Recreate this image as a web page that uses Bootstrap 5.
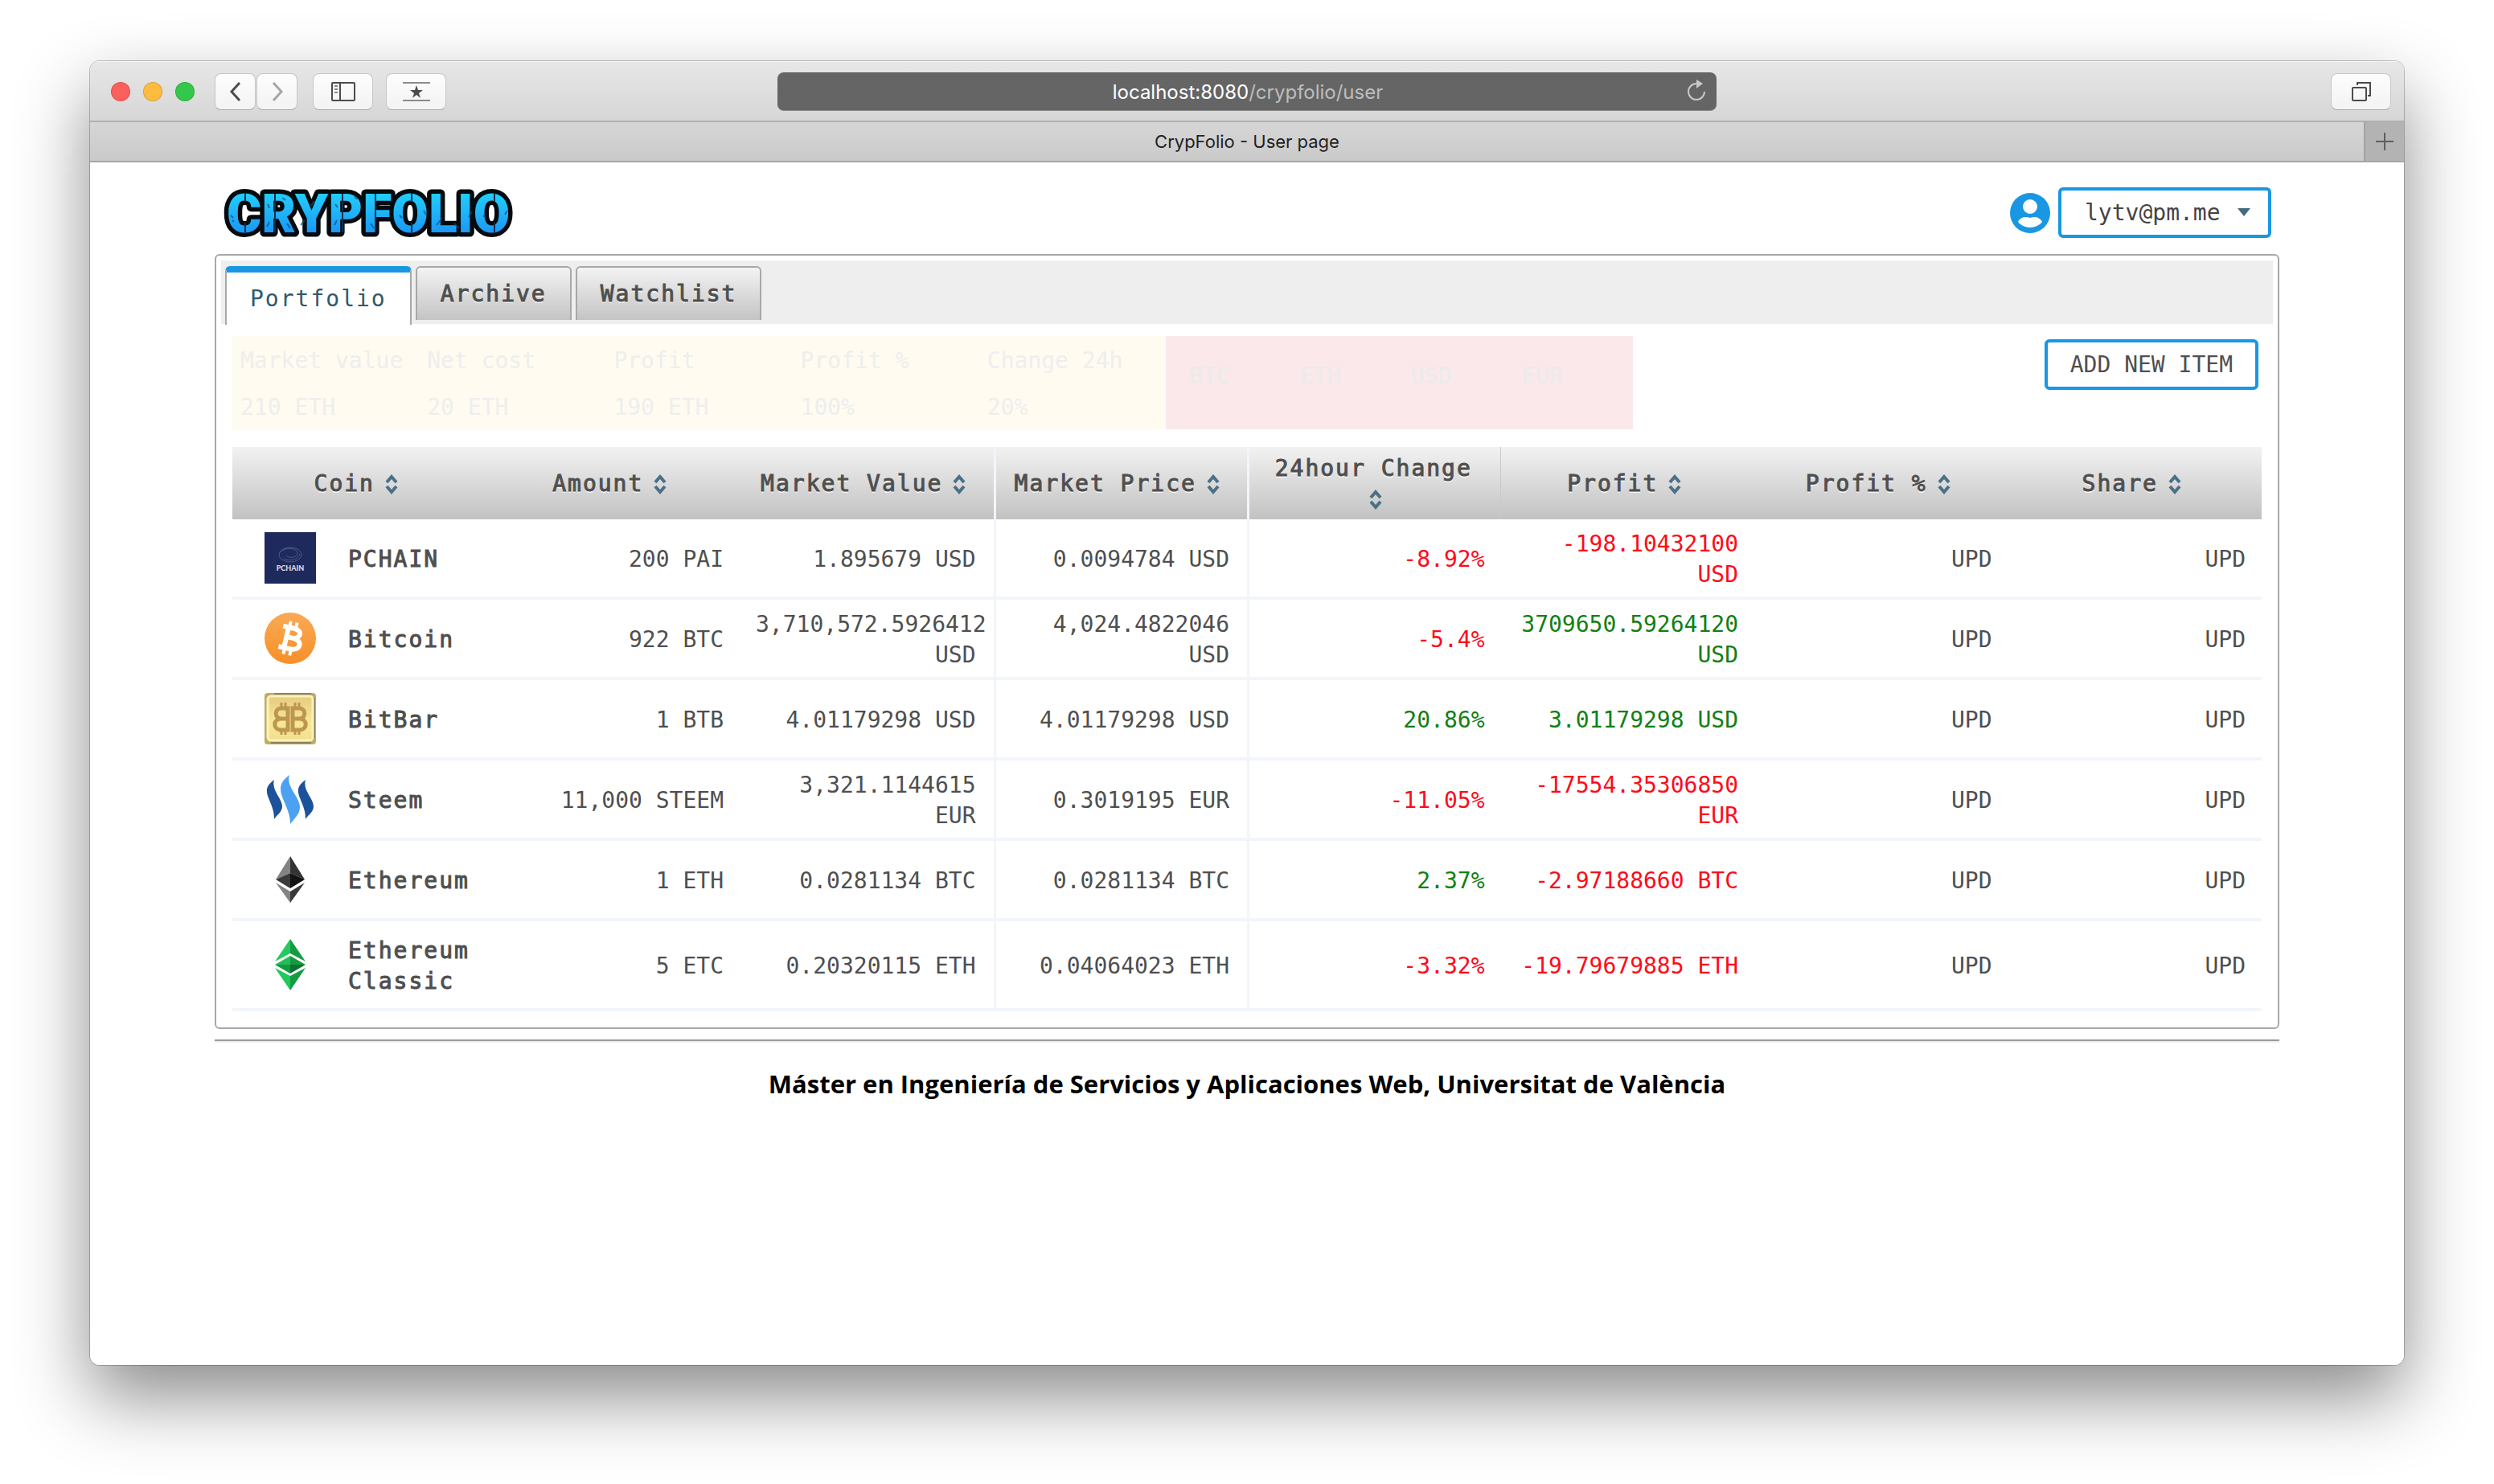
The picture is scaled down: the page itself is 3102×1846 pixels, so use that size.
<!DOCTYPE html>
<html lang="en">
<head>
<meta charset="utf-8">
<meta name="viewport" content="width=device-width, initial-scale=1">
<title>CrypFolio - User page</title>
<link href="https://cdn.jsdelivr.net/npm/bootstrap@5.3.0/dist/css/bootstrap.min.css" rel="stylesheet">
<style>
  :root { --accent: #1997e3; --ink: #4f4f4f; --rule: #f2f5fa; --frame: #a8a8a8; }
  body { background: #fff; color: var(--ink); font-family: "DejaVu Sans Mono", "Liberation Mono", monospace; font-size: 28px; line-height: 38px; }
  button { font: inherit; color: inherit; }
  .stage { padding: 76px 112px 148px; min-height: 100vh; }

  /* browser window */
  .win { background: #fff; border-radius: 12px; overflow: hidden; }
  .win-shadow { border-radius: 12px; box-shadow: 0 0 0 1px rgba(0,0,0,.22), 0 40px 90px rgba(0,0,0,.46); }
  .toolbar { height: 76px; padding: 0 16px; background: linear-gradient(#e7e7e7, #d6d6d6); border-bottom: 2px solid #b0b0b0; border-top: 1px solid #f6f6f6; font-family: Inter, "Liberation Sans", sans-serif; }
  .lights { gap: 16px; margin: 0 25px 0 10px; }
  .light { width: 24px; height: 24px; border-radius: 50%; border: 1px solid rgba(0,0,0,.14); }
  .light-close { background: #fc605c; }
  .light-min { background: #fdbc40; }
  .light-max { background: #34c84a; }
  .tool { height: 46px; width: 75px; padding: 0; border: 1px solid #c6c6c6; border-bottom-color: #a9a9a9; border-radius: 8px; background: linear-gradient(#fdfdfd, #f3f3f3); display: flex; align-items: center; justify-content: center; }
  .history { gap: 1px; margin-right: 19px; }
  .tool-nav { width: 51px; }
  .side { flex: 1 1 0; }
  .address { width: 1168px; height: 48px; border-radius: 8px; background: #656565; border-bottom: 1px solid #8a8a8a; font-size: 24px; line-height: 50px; }
  .address button { background: none; border: 0; padding: 0; color: #fff; }
  .address .url { padding-left: 52px; }
  .address .path { color: #bdbdbd; }
  .address .reload { width: 50px; display: flex; align-items: center; justify-content: center; }
  .tabstrip { height: 50px; background: linear-gradient(#d6d6d6, #cacaca); border-bottom: 2px solid #a6a6a6; color: #222; font-family: Inter, "Liberation Sans", sans-serif; font-size: 22px; line-height: 48px; padding-left: 50px; }
  .newtab { width: 50px; border: 0; border-left: 2px solid #a2a2a2; background: #b3b3b3; padding: 0; display: flex; align-items: center; justify-content: center; }

  /* page */
  .page { padding: 0 155px; min-height: 1496px; }
  .topbar { padding: 22px 10px 12px 8px; }
  .boxed { border: 4px solid var(--accent); border-radius: 6px; height: 63px; background-color: #fff; color: var(--ink); font-size: 28px; line-height: 38px; }
  .account { width: 265px; padding: 9px 60px 7px 29px; font-family: inherit; color: #444;
    background-image: url("data:image/svg+xml,%3Csvg xmlns='http://www.w3.org/2000/svg' viewBox='0 0 16 10'%3E%3Cpath fill='%23436a80' d='M0 0h16L8 10z'/%3E%3C/svg%3E");
    background-size: 16px 10px; background-position: right 22px center; }
  .panel-box { border: 2px solid var(--frame); border-radius: 6px; padding: 6px; }
  .tabs { background: #eee; padding: 7px 5px 0; height: 79px; }
  .tabs .nav-link { border: 2px solid var(--frame); border-bottom: 0; border-radius: 6px 6px 0 0; padding: 14px 29px 15px; margin-right: 5px; height: 67px; color: var(--ink); background: linear-gradient(#f3f3f3, #c4c4c4); text-shadow: 0 2px 0 rgba(255,255,255,.8); }
  .tabs .nav-link.active { height: 73px; border-top: 8px solid var(--accent); background: #fff; color: #30596e; text-shadow: none; }
  .strong-text { letter-spacing: 2px; font-weight: 500; -webkit-text-stroke: 1px currentColor; }
  .active.strong-text { -webkit-text-stroke-width: 0; }
  .content { padding: 15px 14px 14px; }
  .summary { color: #eee; }
  .figures { width: 46%; background: #fffbf0; padding: 12px 0 8px; }
  .figures dt, .figures dd { margin: 0; padding: 0 0 0 10px; font-weight: 400; line-height: 38px; white-space: nowrap; }
  .figures dt { margin-bottom: 20px; }
  .figures > div { width: 20%; }
  .units { width: 23%; background: #fae8eb; color: #e9ecea; padding-top: 31px; }
  .units span { width: 138px; padding-left: 29px; }
  .add { padding: 0 28px; margin-top: 4px; margin-right: 4px; }

  .coins { table-layout: fixed; margin: 22px 0 0; width: 100%; border-collapse: separate; border-spacing: 0; color: var(--ink); }
  .coins thead tr { background: linear-gradient(#f2f2f2, #c2c2c2); }
  .coins th { font-weight: 500; }
  .coins thead th { height: 90px; padding: 8px 20px 6px; text-align: center; vertical-align: middle; text-shadow: 0 2px 0 rgba(255,255,255,.8); }
  .coins tbody > tr > * { border-bottom: 4px solid var(--rule); padding: 12px 20px 8px; vertical-align: middle; text-align: right; }
  .coins tbody > tr > :nth-child(3), .coins tbody > tr > :nth-child(4) { padding-right: 22px; }
  .coins tr > :nth-child(4), .coins tr > :nth-child(5) { border-left: 3px solid var(--rule); padding-left: 17px; }
  .coins thead th:nth-child(5) { border-right: 1px solid #c9c9c9; }
  .coins tbody > tr > .coin { padding: 16px 20px 16px 40px; text-align: left; }
  .coin svg { width: 64px; height: 64px; margin-right: 40px; flex: none; }
  .coin .strong-text { padding-top: 2px; margin-bottom: -2px; }
  .sort { width: 32px; height: 32px; margin-left: 5px; vertical-align: -7px; }
  .up { color: #128012; }
  .down { color: #ff0a1a; }
  .divider { height: 4px; margin-top: 13px; border-top: 2px solid #9a9a9a; background: #eee; }
  .credits { margin: 31px 0 0; color: #000; font-family: "Open Sans", sans-serif; font-weight: 700; font-size: 31px; line-height: 40px; text-align: center; }
</style>
</head>
<body>
<svg width="0" height="0" class="position-absolute" aria-hidden="true">
  <symbol id="sort" viewBox="0 0 32 32"><path d="M10 14l6-7 6 7M10 19l6 7 6-7" fill="none" stroke="#4a7086" stroke-width="4"/></symbol>
</svg>
<div class="stage">
<div class="win-shadow">
<div class="win">
  <div class="toolbar d-flex align-items-center">
    <div class="side d-flex align-items-center">
      <div class="lights d-flex">
        <span class="light light-close"></span>
        <span class="light light-min"></span>
        <span class="light light-max"></span>
      </div>
      <div class="history d-flex">
        <button class="tool tool-nav" aria-label="Back"><svg width="18" height="28" viewBox="0 0 18 28"><path d="M14 3L4 14l10 11" fill="none" stroke="#4c4c4c" stroke-width="3"/></svg></button>
        <button class="tool tool-nav" aria-label="Forward"><svg width="18" height="28" viewBox="0 0 18 28"><path d="M4 3l10 11L4 25" fill="none" stroke="#a6a6a6" stroke-width="3"/></svg></button>
      </div>
      <button class="tool" aria-label="Sidebar"><svg width="30" height="24" viewBox="0 0 30 24"><g fill="none" stroke="#4c4c4c" stroke-width="2"><rect x="1" y="1" width="28" height="22" rx="1"/><path d="M11 1v22"/><path d="M4 5h4M4 9h4M4 13h4" stroke="#888"/></g></svg></button>
      <button class="tool ms-3" aria-label="Top sites"><svg width="34" height="26" viewBox="0 0 34 26"><path d="M0 2h34M0 24h34" stroke="#8b8b8b" stroke-width="2"/><path d="M17 5l2 6h6l-5 4 2 6-5-4-5 4 2-6-5-4h6z" fill="#4c4c4c"/></svg></button>
    </div>
    <div class="address d-flex">
      <button class="url flex-fill" aria-label="Address">localhost:8080<span class="path">/crypfolio/user</span></button>
      <button class="reload" aria-label="Reload"><svg width="26" height="28" viewBox="0 0 26 28"><path d="M13 5a10 10 0 1 0 10 10" fill="none" stroke="#c8c8c8" stroke-width="2"/><path d="M13 0l8 5-8 6z" fill="#c8c8c8"/></svg></button>
    </div>
    <div class="side d-flex justify-content-end">
      <button class="tool" aria-label="Show all tabs"><svg width="26" height="26" viewBox="0 0 26 26"><g fill="none" stroke="#4c4c4c" stroke-width="2"><rect x="2" y="8" width="17" height="16" rx="1"/><path d="M8 5V2h16v16h-3"/></g></svg></button>
    </div>
  </div>
  <div class="tabstrip d-flex">
    <div class="flex-fill text-center">CrypFolio - User page</div>
    <button class="newtab" aria-label="New tab"><svg width="22" height="22" viewBox="0 0 22 22"><path d="M11 0v22M0 11h22" stroke="#5e5e5e" stroke-width="2"/></svg></button>
  </div>

  <div class="page">
    <header class="topbar d-flex align-items-center justify-content-between">
      <svg width="370" height="80" viewBox="0 0 370 80" role="img" aria-label="CRYPFOLIO">
        <defs><linearGradient id="brand" x1="0" y1="0" x2="0" y2="1"><stop offset=".2" stop-color="#22cbfb"/><stop offset=".85" stop-color="#1b93f5"/></linearGradient></defs>
        <text x="7" y="65" font-family="Roboto, sans-serif" font-weight="900" font-size="66" fill="url(#brand)" stroke="#050a0e" stroke-width="11" stroke-linejoin="round" paint-order="stroke">CRYPFOLIO</text>
        <path d="M30 16v11M30 53v12M237 16v11M237 53v12M340 16v11M340 53v12M67 17v48M151 17v48M192 17v48" stroke="#08304a" stroke-width="2"/>
        <path d="M12 44l3 3M14 50l2 2M58 30l2 5M60 52l-3 6M76 22l4 3M82 54l4 6M104 50l-5 6M116 26l-4 6M142 30l3 4M144 50l-3 6M166 20l3 4M186 54l4 6M222 44l3 3M252 38l3 5M268 56l7-9M290 54l6 6M308 46l4-7M326 44l3 3M356 38l-3 5" stroke="#0a4f86" stroke-width="2" opacity=".7"/>
      </svg>
      <div class="d-flex align-items-center">
        <svg class="me-2" width="53" height="53" viewBox="0 0 53 53" aria-hidden="true"><circle cx="26" cy="27" r="25" fill="#1997e3"/><circle cx="26" cy="19" r="9" fill="#fff"/><path d="M11 38c3-6 9-7 15-5 6-2 12-1 15 5-3 4-9 7-15 7s-12-3-15-7z" fill="#fff"/></svg>
        <select class="form-select boxed account" aria-label="Account"><option>lytv@pm.me</option></select>
      </div>
    </header>

    <main class="panel-box">
      <nav class="nav tabs align-items-start">
        <a class="nav-link strong-text active" href="#">Portfolio</a>
        <a class="nav-link strong-text" href="#">Archive</a>
        <a class="nav-link strong-text" href="#">Watchlist</a>
      </nav>
      <div class="content">
        <div class="summary d-flex">
          <dl class="figures d-flex m-0">
            <div><dt>Market value</dt><dd>210 ETH</dd></div>
            <div><dt>Net cost</dt><dd>20 ETH</dd></div>
            <div><dt>Profit</dt><dd>190 ETH</dd></div>
            <div><dt>Profit %</dt><dd>100%</dd></div>
            <div><dt>Change 24h</dt><dd>20%</dd></div>
          </dl>
          <div class="units d-flex"><span>BTC</span><span>ETH</span><span>USD</span><span>EUR</span></div>
          <button class="boxed add ms-auto">ADD NEW ITEM</button>
        </div>
        <table class="coins">
          <thead class="strong-text"><tr>
            <th>Coin<svg class="sort"><use href="#sort"/></svg></th>
            <th>Amount<svg class="sort"><use href="#sort"/></svg></th>
            <th>Market Value<svg class="sort"><use href="#sort"/></svg></th>
            <th>Market Price<svg class="sort"><use href="#sort"/></svg></th>
            <th>24hour Change<svg class="sort"><use href="#sort"/></svg></th>
            <th>Profit<svg class="sort"><use href="#sort"/></svg></th>
            <th>Profit %<svg class="sort"><use href="#sort"/></svg></th>
            <th>Share<svg class="sort"><use href="#sort"/></svg></th>
          </tr></thead>
          <tbody>
            <tr>
              <th class="coin" scope="row"><div class="d-flex align-items-center"><svg viewBox="0 0 64 64"><path fill="#1f2a5c" d="M0 0h64v64H0z"/><g fill="none" stroke="#4d5886" stroke-width="1"><ellipse cx="32" cy="28" rx="14" ry="9"/><path d="M20 25c5-7 20-6 21 1 0 6-12 7-14 3M24 33c8 4 18 1 20-6"/></g><text x="32" y="48" text-anchor="middle" font-family="Lato, sans-serif" font-weight="900" font-size="9" fill="#d8dbe8">PCHAIN</text></svg><span class="strong-text">PCHAIN</span></div></th>
              <td>200 PAI</td><td>1.895679 USD</td><td>0.0094784 USD</td><td class="down">-8.92%</td><td class="down">-198.10432100 USD</td><td>UPD</td><td>UPD</td>
            </tr>
            <tr>
              <th class="coin" scope="row"><div class="d-flex align-items-center"><svg viewBox="0 0 64 64"><defs><linearGradient id="btc" x1="0" y1="0" x2="0" y2="1"><stop stop-color="#f9aa55"/><stop offset="1" stop-color="#f78f28"/></linearGradient></defs><circle cx="32" cy="32" r="32" fill="url(#btc)"/><g transform="rotate(13 32 32)" fill="none" stroke="#fff"><path d="M20 19h14c12 0 11 12 0 12H26h9c14 0 13 14 0 14H20M27 19v26" stroke-width="6"/><path d="M28 11v7M36 11v7M28 46v7M36 46v7" stroke-width="4"/></g></svg><span class="strong-text">Bitcoin</span></div></th>
              <td>922 BTC</td><td>3,710,572.5926412 USD</td><td>4,024.4822046 USD</td><td class="down">-5.4%</td><td class="up">3709650.59264120 USD</td><td>UPD</td><td>UPD</td>
            </tr>
            <tr>
              <th class="coin" scope="row"><div class="d-flex align-items-center"><svg viewBox="0 0 64 64"><defs><linearGradient id="gold" x1="0" y1="0" x2="0" y2="1"><stop stop-color="#e6cb80"/><stop offset=".6" stop-color="#f8e896"/><stop offset="1" stop-color="#f3e08c"/></linearGradient></defs><rect width="64" height="64" rx="4" fill="#c3ab60"/><path d="M12 1h46M8 62h50M62 6v50" stroke="#8d8060" stroke-width="2"/><rect x="4" y="4" width="56" height="55" rx="4" fill="url(#gold)" stroke="#fbf3b8" stroke-width="3"/><g fill="none" stroke="#bd9650"><path d="M29 19h-8c-9 0-9 13 0 13-11 0-11 14 0 14h8zM35 19h8c9 0 9 13 0 13 11 0 11 14 0 14h-8zM21 32h8M35 32h8" stroke-width="5"/><path d="M21 12v6M26 12v6M38 12v6M43 12v6M21 46v6M26 46v6M38 46v6M43 46v6" stroke-width="3"/></g></svg><span class="strong-text">BitBar</span></div></th>
              <td>1 BTB</td><td>4.01179298 USD</td><td>4.01179298 USD</td><td class="up">20.86%</td><td class="up">3.01179298 USD</td><td>UPD</td><td>UPD</td>
            </tr>
            <tr>
              <th class="coin" scope="row"><div class="d-flex align-items-center"><svg viewBox="0 0 64 64"><g fill="#1b5299"><path id="wave" d="M12 8C4 14 1 19 4 28c4 11 8 17 8 29 4-6 10-9 10-16 0-10-14-20-10-33z"/><use href="#wave" x="39"/></g><path d="M31 2c-9 7-13 13-10 24 4 13 11 22 11 37 5-7 12-12 12-21 0-13-18-25-13-40z" fill="#4ba2f2"/></svg><span class="strong-text">Steem</span></div></th>
              <td>11,000 STEEM</td><td>3,321.1144615 EUR</td><td>0.3019195 EUR</td><td class="down">-11.05%</td><td class="down">-17554.35306850 EUR</td><td>UPD</td><td>UPD</td>
            </tr>
            <tr>
              <th class="coin" scope="row"><div class="d-flex align-items-center"><svg viewBox="0 0 64 64"><path d="M32 3L14 32l18-8z" fill="#828384"/><path d="M32 3l18 29-18-8z" fill="#343434"/><path d="M32 24v19L14 32z" fill="#3a3a3a"/><path d="M32 24v19l18-11z" fill="#131313"/><path d="M14 36l18 11v14z" fill="#828384"/><path d="M50 36L32 47v14z" fill="#3a3a3a"/></svg><span class="strong-text">Ethereum</span></div></th>
              <td>1 ETH</td><td>0.0281134 BTC</td><td>0.0281134 BTC</td><td class="up">2.37%</td><td class="down">-2.97188660 BTC</td><td>UPD</td><td>UPD</td>
            </tr>
            <tr>
              <th class="coin" scope="row"><div class="d-flex align-items-center"><svg viewBox="0 0 64 64"><path d="M32 0L13 28l19-10z" fill="#26c95f"/><path d="M32 0l19 28-19-10z" fill="#159c43"/><path d="M13 36l19 28V46z" fill="#1fc95a"/><path d="M51 36L32 64V46z" fill="#159c43"/><path d="M32 21L13 32h19z" fill="#23bd58"/><path d="M32 21l19 11H32z" fill="#149a41"/><path d="M13 32l19 11V32z" fill="#149a41"/><path d="M51 32L32 43V32z" fill="#0c7430"/></svg><span class="strong-text">Ethereum Classic</span></div></th>
              <td>5 ETC</td><td>0.20320115 ETH</td><td>0.04064023 ETH</td><td class="down">-3.32%</td><td class="down">-19.79679885 ETH</td><td>UPD</td><td>UPD</td>
            </tr>
          </tbody>
        </table>
      </div>
    </main>
    <div class="divider"></div>
    <footer class="credits">Máster en Ingeniería de Servicios y Aplicaciones Web, Universitat de València</footer>
  </div>
</div>
</div>
</div>
<script src="https://cdn.jsdelivr.net/npm/bootstrap@5.3.0/dist/js/bootstrap.bundle.min.js"></script>
</body>
</html>
